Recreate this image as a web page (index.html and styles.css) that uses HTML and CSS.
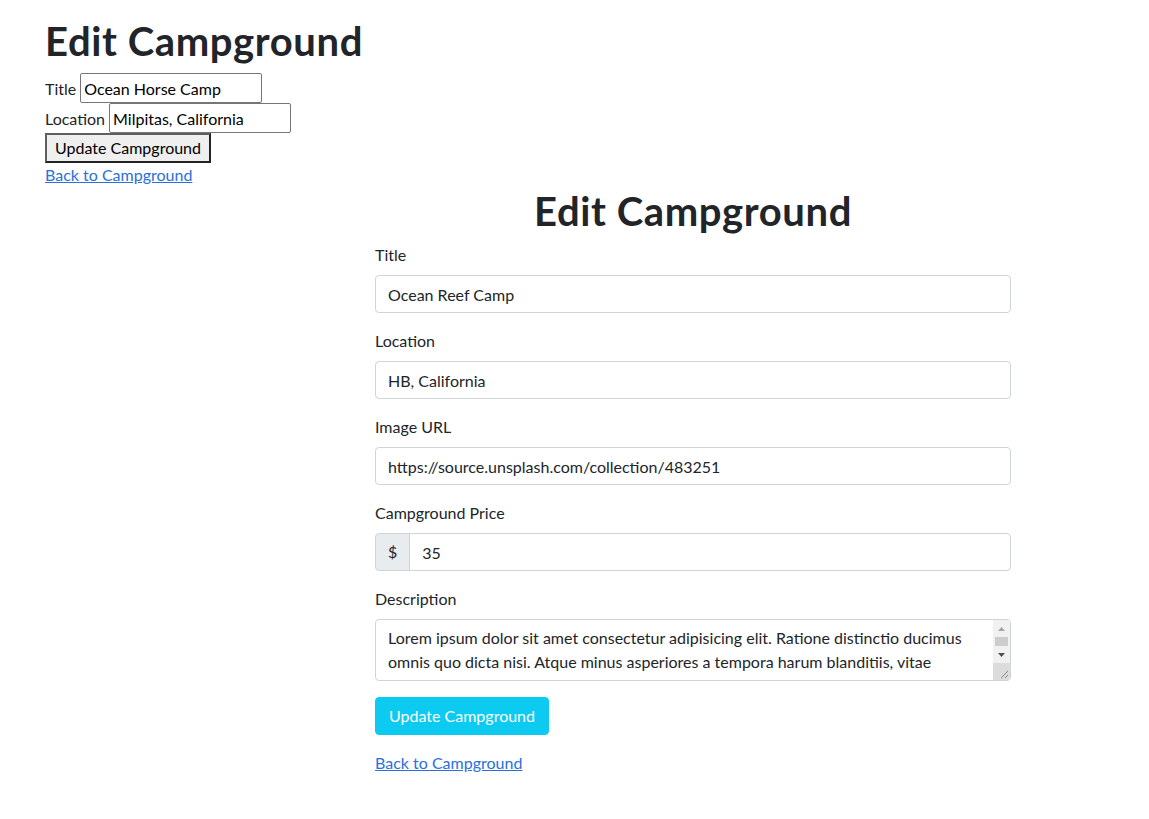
FILE: index.html
```html
<!DOCTYPE html>
<html lang="en">
<head>
<meta charset="utf-8">
<title>Edit Campground</title>
<link rel="stylesheet" href="styles.css">
</head>
<body>
  <section class="legacy">
    <h1 class="legacy-title">Edit Campground</h1>
    <form class="legacy-form">
      <div class="legacy-field">
        <label for="lt">Title</label>
        <input id="lt" class="legacy-input" type="text" value="Ocean Horse Camp">
      </div>
      <div class="legacy-field">
        <label for="ll">Location</label>
        <input id="ll" class="legacy-input" type="text" value="Milpitas, California">
      </div>
      <button class="legacy-btn" type="button">Update Campground</button>
    </form>
    <a class="link" href="#">Back to Campground</a>
  </section>

  <main class="panel">
    <h1 class="panel-title">Edit Campground</h1>
    <form class="panel-form">
      <div class="group">
        <label class="form-label" for="title">Title</label>
        <input class="form-control" id="title" type="text" value="Ocean Reef Camp">
      </div>
      <div class="group">
        <label class="form-label" for="location">Location</label>
        <input class="form-control" id="location" type="text" value="HB, California">
      </div>
      <div class="group">
        <label class="form-label" for="image">Image URL</label>
        <input class="form-control" id="image" type="text" value="https://source.unsplash.com/collection/483251">
      </div>
      <div class="group">
        <label class="form-label" for="price">Campground Price</label>
        <div class="input-group">
          <span class="input-group-text">$</span>
          <input class="form-control joined" id="price" type="text" value="35">
        </div>
      </div>
      <div class="group">
        <label class="form-label" for="description">Description</label>
        <div class="desc-box">
          <textarea class="desc" id="description" rows="2">Lorem ipsum dolor sit amet consectetur adipisicing elit. Ratione distinctio ducimus omnis quo dicta nisi. Atque minus asperiores a tempora harum blanditiis, vitae voluptatum quae quas illo accusantium ex repudiandae sed deleniti odio facilis, nobis quis.</textarea>
          <div class="vscroll" aria-hidden="true">
            <span class="sb-btn">
              <svg width="7" height="4" viewBox="0 0 7 4"><path d="M0 4 L3.5 0 L7 4 Z" fill="#a3a3a3"/></svg>
            </span>
            <span class="sb-track"><span class="sb-thumb"></span></span>
            <span class="sb-btn">
              <svg width="7" height="4" viewBox="0 0 7 4"><path d="M0 0 L7 0 L3.5 4 Z" fill="#505050"/></svg>
            </span>
            <span class="sb-corner">
              <svg width="17" height="17" viewBox="0 0 17 17"><path d="M15 8 L8 15 M15 12 L12 15" stroke="#8a8a8a" stroke-width="1" fill="none"/></svg>
            </span>
          </div>
        </div>
      </div>
      <div class="group">
        <button class="btn-info" type="button">Update Campground</button>
      </div>
    </form>
    <a class="link" href="#">Back to Campground</a>
  </main>
</body>
</html>
```

FILE: styles.css
```css
*,
*::before,
*::after {
  box-sizing: border-box;
}

body {
  margin: 0;
  font-family: Lato, "Liberation Sans", sans-serif;
  font-size: 16px;
  line-height: 1.5;
  color: #212529;
  background: #fff;
}

h1 {
  margin: 0 0 8px;
  font-size: 40px;
  line-height: 1.2;
  font-weight: 700;
  letter-spacing: 0.6px;
  color: #212529;
}

.link {
  color: #2a6fdc;
  text-decoration: underline;
}

/* ---------- unstyled legacy form ---------- */
.legacy {
  padding: 17px 45px 0;
}

.legacy-form {
  margin: 0;
}

.legacy-field {
  display: flex;
  align-items: baseline;
  gap: 4px;
  height: 30px;
}

.legacy-input {
  width: 182px;
  height: 30px;
  margin: 0;
  padding: 1px 3px;
  font: inherit;
  line-height: 24px;
  color: #000;
  background: #fff;
  border: 1px solid #767676;
  border-radius: 2px;
}

.legacy-btn {
  display: block;
  height: 30px;
  margin: 0;
  padding: 0 8px;
  font: inherit;
  line-height: 24px;
  color: #000;
  background: #efefef;
  border: 2px solid;
  border-color: #5f5f5f #222 #222 #5f5f5f;
}

.legacy .link {
  display: block;
  width: max-content;
}

/* ---------- bootstrap-like form ---------- */
.panel {
  width: 636px;
  margin-left: 375px;
}

.panel-title {
  text-align: center;
}

.panel-form {
  margin: 0;
}

.group {
  margin-bottom: 16px;
}

.form-label {
  display: inline-block;
  margin-bottom: 8px;
}

.form-control {
  display: block;
  width: 100%;
  height: 38px;
  margin: 0;
  padding: 6px 12px;
  font: inherit;
  line-height: 1.5;
  color: #212529;
  background: #fff;
  border: 1px solid #ced4da;
  border-radius: 4px;
}

.input-group {
  display: flex;
  align-items: stretch;
}

.input-group-text {
  display: flex;
  align-items: center;
  padding: 6px 12px;
  color: #212529;
  background: #e9ecef;
  border: 1px solid #ced4da;
  border-radius: 4px 0 0 4px;
}

.form-control.joined {
  flex: 1;
  width: auto;
  margin-left: -1px;
  border-radius: 0 4px 4px 0;
}

/* textarea with a drawn scrollbar */
.desc-box {
  display: flex;
  height: 62px;
  background: #fff;
  border: 1px solid #ced4da;
  border-radius: 4px;
  overflow: hidden;
}

.desc {
  flex: 1;
  min-width: 0;
  height: 100%;
  margin: 0;
  padding: 6px 12px;
  font: inherit;
  line-height: 1.5;
  color: #212529;
  background: transparent;
  border: 0;
  outline: none;
  resize: none;
  overflow: hidden;
}

.vscroll {
  display: flex;
  flex-direction: column;
  width: 17px;
  background: #f1f1f1;
}

.sb-btn {
  display: flex;
  align-items: center;
  justify-content: center;
  height: 17px;
}

.sb-btn svg,
.sb-corner svg {
  display: block;
}

.sb-track {
  flex: 1;
  display: flex;
  padding: 0 2px;
}

.sb-thumb {
  flex: 1;
  background: #cdcdcd;
}

.sb-corner {
  height: 17px;
  background: #dcdcdc;
}

.btn-info {
  display: inline-block;
  margin: 0;
  padding: 6px 13px;
  font: inherit;
  line-height: 1.5;
  color: #fff;
  background: #0dcaf0;
  border: 1px solid #0dcaf0;
  border-radius: 4px;
}
```
